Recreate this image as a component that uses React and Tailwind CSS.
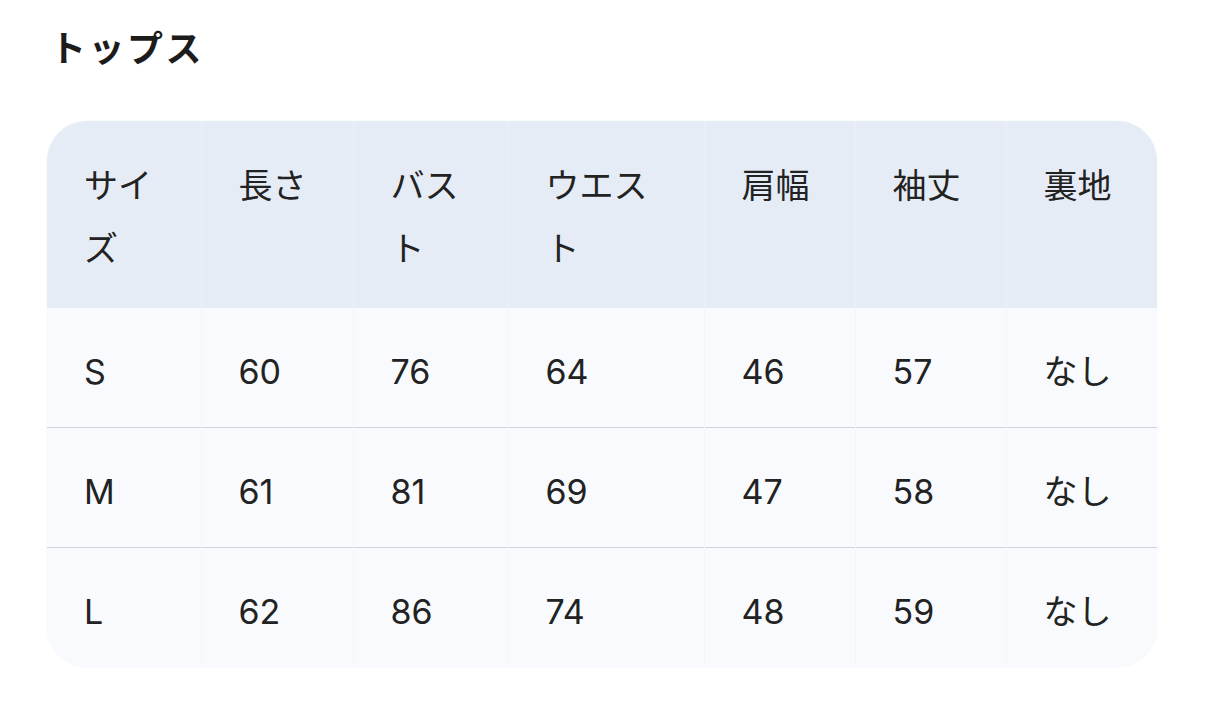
import React from 'react';

const widths = ['w-[154px]', 'w-[152px]', 'w-[155px]', 'w-[196px]', 'w-[151px]', 'w-[151px]', 'w-[151px]'];
// header labels wrap like the narrow mobile table
const headLabels = [
  ['サイ', 'ズ'],
  ['長さ'],
  ['バス', 'ト'],
  ['ウエス', 'ト'],
  ['肩幅'],
  ['袖丈'],
  ['裏地'],
];

const rows = [
  ['S', '60', '76', '64', '46', '57', 'なし'],
  ['M', '61', '81', '69', '47', '58', 'なし'],
  ['L', '62', '86', '74', '48', '59', 'なし'],
];

const App = () => {
  return (
    <div className="min-h-screen w-full bg-white text-[#222] font-['Inter','Noto_Sans_CJK_JP',sans-serif]">
      <div className="pl-[47px] pr-[48px] pt-[22px]">
        <h2 className="ml-[3px] text-[36px] font-bold leading-[48px] tracking-[2.5px] text-[#1c1c1c] font-['Noto_Sans_CJK_JP',sans-serif]">
          トップス
        </h2>

        <div className="mt-[51px] w-[1110px] rounded-[40px] overflow-hidden bg-[#f8fafd] shadow-[0_0_2px_rgba(0,0,0,0.06)]">
          <table className="w-full table-fixed border-collapse text-[34px] leading-[63px]">
            <colgroup>
              {widths.map((w, i) => (
                <col key={i} className={w} />
              ))}
            </colgroup>
            <thead>
              <tr className="bg-[#e5ecf5]">
                {headLabels.map((lines, i) => (
                  <th
                    key={i}
                    className={`text-left font-normal align-top pl-[37px] pr-[8px] pt-[33px] pb-[28px] ${i < 6 ? 'border-r border-[#ebf0f6]' : ''}`}
                  >
                    {lines.map((l) => (
                      <div key={l}>{l}</div>
                    ))}
                  </th>
                ))}
              </tr>
            </thead>
            <tbody>
              {rows.map((row, r) => (
                <tr key={row[0]} className={r > 0 ? 'border-t border-[#cfd3d9]' : ''}>
                  {row.map((cell, i) => (
                    <td
                      key={i}
                      className={`pl-[37px] pr-[8px] pt-[32px] pb-[24px] ${i < 6 ? 'border-r border-[#f3f5f9]' : ''}`}
                    >
                      {cell}
                    </td>
                  ))}
                </tr>
              ))}
            </tbody>
          </table>
        </div>
      </div>
    </div>
  );
};

export default App;
